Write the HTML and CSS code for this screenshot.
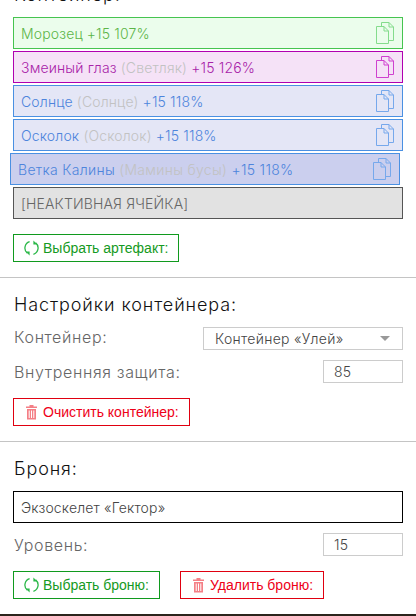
FILE: index.html
```html
<!DOCTYPE html>
<html lang="ru">
<head>
    <meta charset="UTF-8">
    <meta name="viewport" content="width=device-width, initial-scale=1.0">
    <title>Контейнер</title>
    <link rel="stylesheet" href="styles.css">
</head>
<body>
    <svg class="sprite" width="0" height="0">
        <symbol id="icon-files" viewBox="0 0 18 22">
            <path d="M5.5 4V.5H13L17.5 5V18.5H12.5" fill="none" stroke="currentColor"/>
            <path d="M13 .5V5H17.5" fill="none" stroke="currentColor"/>
            <path d="M.5 4.5H8L12.5 9V21.5H.5Z" fill="none" stroke="currentColor"/>
            <path d="M8 4.5V9H12.5" fill="none" stroke="currentColor"/>
        </symbol>
        <symbol id="icon-swap" viewBox="0 0 15 16">
            <path d="M5.6 1.7A6.7 6.7 0 0 0 3.4 13.3" fill="none" stroke="currentColor" stroke-width="1.3"/>
            <path d="M9.4 14.3A6.7 6.7 0 0 0 11.6 2.7" fill="none" stroke="currentColor" stroke-width="1.3"/>
            <path d="M1.6 11.4H5.6V15.6Z" fill="currentColor"/>
            <path d="M13.4 4.6H9.4V.4Z" fill="currentColor"/>
        </symbol>
        <symbol id="icon-trash" viewBox="0 0 12 16">
            <path d="M.5 2.5H11.5V4H.5ZM4 2.5V1H8V2.5Z" fill="currentColor"/>
            <path d="M1.5 5H10.5V15.5H1.5ZM3.2 6.5V14H4.2V6.5ZM5.5 6.5V14H6.5V6.5ZM7.8 6.5V14H8.8V6.5Z" fill="currentColor" fill-rule="evenodd"/>
        </symbol>
    </svg>

    <div class="page">
        <section class="block">
            <h3>Контейнер:</h3>
            <div class="slots">
                <div class="slot slot-green">
                    <span>Морозец +15 107%</span>
                    <svg class="slot-icon"><use href="#icon-files"/></svg>
                </div>
                <div class="slot slot-purple">
                    <span>Змеиный глаз <i>(Светляк)</i> +15 126%</span>
                    <svg class="slot-icon"><use href="#icon-files"/></svg>
                </div>
                <div class="slot slot-blue">
                    <span>Солнце <i>(Солнце)</i> +15 118%</span>
                    <svg class="slot-icon"><use href="#icon-files"/></svg>
                </div>
                <div class="slot slot-blue">
                    <span>Осколок <i>(Осколок)</i> +15 118%</span>
                    <svg class="slot-icon"><use href="#icon-files"/></svg>
                </div>
                <div class="slot slot-blue slot-hover">
                    <span>Ветка Калины <i>(Мамины бусы)</i> +15 118%</span>
                    <svg class="slot-icon"><use href="#icon-files"/></svg>
                </div>
                <div class="slot slot-empty">
                    <span>[НЕАКТИВНАЯ ЯЧЕЙКА]</span>
                </div>
            </div>
            <div class="buttons">
                <button class="btn btn-green">
                    <svg class="btn-icon"><use href="#icon-swap"/></svg>Выбрать артефакт:
                </button>
            </div>
        </section>

        <section class="block">
            <h3>Настройки контейнера:</h3>
            <div class="field field-select">
                <label>Контейнер:</label>
                <div class="select">Контейнер «Улей»<span class="arrow"></span></div>
            </div>
            <div class="field">
                <label>Внутренняя защита:</label>
                <div class="number">85</div>
            </div>
            <div class="buttons">
                <button class="btn btn-red">
                    <svg class="btn-icon"><use href="#icon-trash"/></svg>Очистить контейнер:
                </button>
            </div>
        </section>

        <section class="block">
            <h3>Броня:</h3>
            <div class="slot slot-armor">
                <span>Экзоскелет «Гектор»</span>
            </div>
            <div class="field">
                <label>Уровень:</label>
                <div class="number">15</div>
            </div>
            <div class="buttons">
                <button class="btn btn-green">
                    <svg class="btn-icon"><use href="#icon-swap"/></svg>Выбрать броню:
                </button>
                <button class="btn btn-red">
                    <svg class="btn-icon"><use href="#icon-trash"/></svg>Удалить броню:
                </button>
            </div>
        </section>
    </div>
    <div class="footer-bar"></div>
</body>
</html>
```

FILE: styles.css
```css
html, body {
    margin: 0;
    height: 616px;
    overflow: hidden;
    background-color: #fff;
}
body {
    font-family: Inter, "Open Sans", sans-serif;
    color: #666;
    display: flex;
    flex-direction: column;
}
.sprite {
    display: block;
}
.page {
    flex: 1;
    margin-top: -32px;
}
.block {
    padding: 14px 13px 15px;
    border-bottom: 1px solid #c4c4c4;
}
.block:last-child {
    border-bottom: none;
}
h3 {
    margin: 0 0 9px;
    font-size: 18px;
    line-height: 26px;
    font-weight: 300;
    letter-spacing: .9px;
    color: #111;
    padding-left: 1px;
}
.slots {
    display: flex;
    flex-direction: column;
    gap: 2px;
}
.slot {
    box-sizing: border-box;
    height: 32px;
    display: flex;
    align-items: center;
    justify-content: space-between;
    padding: 0 8px 0 7px;
    border: 1px solid #555;
    font-size: 14px;
    font-weight: 300;
    letter-spacing: .15px;
}
.slot i {
    font-style: normal;
    color: #c2c2c2;
}
.slot-icon {
    width: 18px;
    height: 22px;
}
.slot-green {
    background-color: #ebfdec;
    border-color: #46c450;
    color: #5cb548;
}
.slot-green .slot-icon {
    color: #84dc8c;
}
.slot-purple {
    background-color: #f5e2f7;
    border-color: #b000b0;
    color: #a822a8;
}
.slot-purple .slot-icon {
    color: #cf40cf;
}
.slot-blue {
    background-color: #e4e6f6;
    border-color: #4a90e2;
    color: #4d84dc;
}
.slot-blue .slot-icon {
    color: #76a8ec;
}
.slot-hover {
    background-color: #cbcfee;
    letter-spacing: .3px;
    transform: translateX(-3px);
}
.slot-empty {
    background-color: #e2e2e2;
    color: #666;
}
.slot-armor {
    border-color: #000;
    color: #444;
}
.field {
    display: flex;
    align-items: center;
    justify-content: space-between;
    height: 23px;
    margin-top: 10px;
    padding-left: 1px;
    font-size: 16px;
    font-weight: 300;
    letter-spacing: .65px;
    color: #666;
}
h3 + .field {
    margin-top: 9px;
}
.field-select label {
    margin-bottom: 4px;
}
.select, .number {
    box-sizing: border-box;
    height: 23px;
    border: 1px solid #ccc;
    font-size: 14px;
    letter-spacing: .3px;
    color: #444;
    display: flex;
    align-items: center;
}
.select {
    width: 200px;
    padding: 0 12px 0 11px;
    justify-content: space-between;
}
.arrow {
    width: 0;
    height: 0;
    border-left: 5px solid transparent;
    border-right: 5px solid transparent;
    border-top: 5px solid #999;
}
.number {
    width: 80px;
    padding-left: 10px;
}
.buttons {
    display: flex;
    gap: 20px;
    margin-top: 15px;
}
.btn {
    box-sizing: border-box;
    height: 28px;
    padding: 0 10px;
    display: flex;
    align-items: center;
    background-color: #fff;
    font-family: "Liberation Sans", Arial, sans-serif;
    font-size: 14px;
    cursor: pointer;
}
.btn-icon {
    width: 15px;
    height: 16px;
    margin-right: 4px;
}
.btn-green {
    border: 1px solid #109a1e;
    color: #159a22;
}
.btn-green .btn-icon {
    color: #2db84a;
}
.btn-red {
    border: 1px solid #e00010;
    color: #ee0018;
}
.btn-red .btn-icon {
    color: #f47f86;
}
.footer-bar {
    height: 2px;
    background-color: #2b241c;
}
```
